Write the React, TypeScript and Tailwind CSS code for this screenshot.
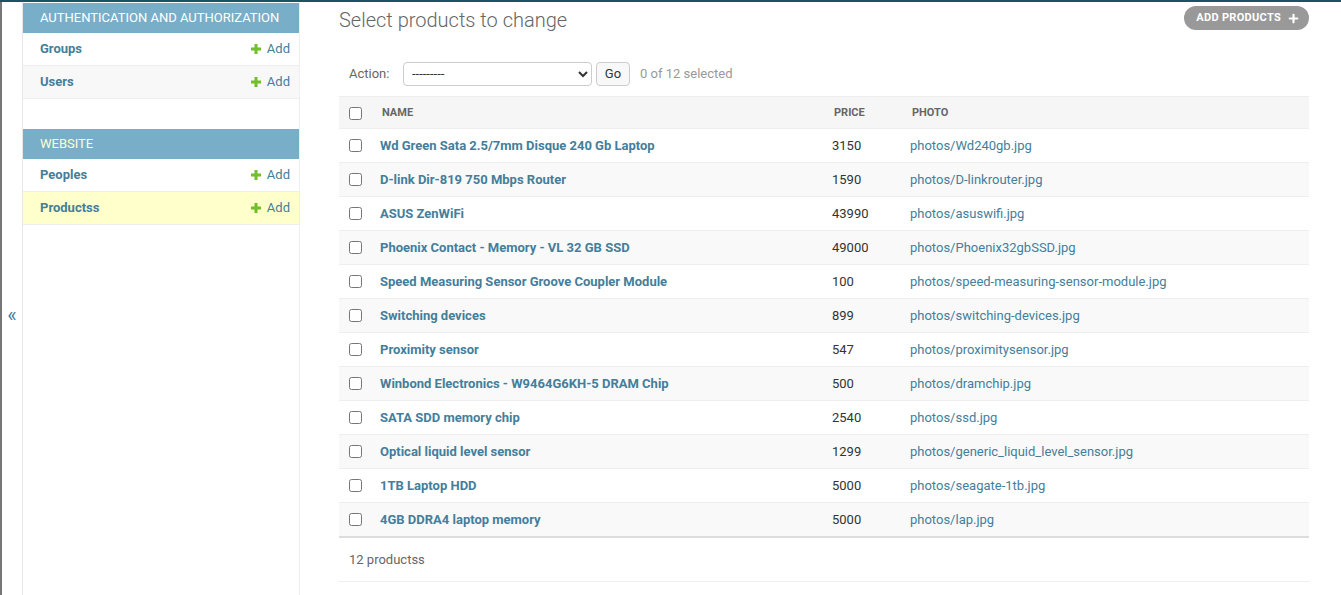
import { Plus } from "lucide-react";

const PRODUCTS = [
  { name: "Wd Green Sata 2.5/7mm Disque 240 Gb Laptop", price: "3150", photo: "photos/Wd240gb.jpg" },
  { name: "D-link Dir-819 750 Mbps Router", price: "1590", photo: "photos/D-linkrouter.jpg" },
  { name: "ASUS ZenWiFi", price: "43990", photo: "photos/asuswifi.jpg" },
  { name: "Phoenix Contact - Memory - VL 32 GB SSD", price: "49000", photo: "photos/Phoenix32gbSSD.jpg" },
  { name: "Speed Measuring Sensor Groove Coupler Module", price: "100", photo: "photos/speed-measuring-sensor-module.jpg" },
  { name: "Switching devices", price: "899", photo: "photos/switching-devices.jpg" },
  { name: "Proximity sensor", price: "547", photo: "photos/proximitysensor.jpg" },
  { name: "Winbond Electronics - W9464G6KH-5 DRAM Chip", price: "500", photo: "photos/dramchip.jpg" },
  { name: "SATA SDD memory chip", price: "2540", photo: "photos/ssd.jpg" },
  { name: "Optical liquid level sensor", price: "1299", photo: "photos/generic_liquid_level_sensor.jpg" },
  { name: "1TB Laptop HDD", price: "5000", photo: "photos/seagate-1tb.jpg" },
  { name: "4GB DDRA4 laptop memory", price: "5000", photo: "photos/lap.jpg" },
];

const SECTIONS = [
  {
    title: "Authentication and Authorization",
    current: false,
    models: [
      { label: "Groups", active: false },
      { label: "Users", active: false },
    ],
  },
  {
    title: "Website",
    current: true,
    models: [
      { label: "Peoples", active: false },
      { label: "Productss", active: true },
    ],
  },
];

function AddIcon() {
  return (
    <svg width="10" height="10" viewBox="0 0 10 10" className="shrink-0">
      <path d="M3.5 0h3v3.5H10v3H6.5V10h-3V6.5H0v-3h3.5z" fill="#70bf2b" />
    </svg>
  );
}

function Sidebar() {
  return (
    <nav className="w-[277px] shrink-0 border-r border-[#eee] pt-px">
      {SECTIONS.map((s, i) => (
        <div key={s.title} className={i > 0 ? "mt-[30px]" : ""}>
          <div className="h-[30px] bg-[#79aec8] pl-[17px] flex items-center">
            <span
              className={`text-[13px] uppercase ${
                s.current ? "text-[#ffc]" : "text-white"
              }`}
            >
              {s.title}
            </span>
          </div>
          {s.models.map((m, j) => (
            <div
              key={m.label}
              className={`h-[33px] border-b border-[#eee] flex items-center justify-between pl-[17px] pr-[9px] ${
                m.active ? "bg-[#ffc]" : j % 2 === 1 ? "bg-[#f8f8f8]" : "bg-white"
              }`}
            >
              <span className="text-[13px] font-bold text-[#447e9b]">{m.label}</span>
              <span className="flex items-center gap-[6px] text-[13px] text-[#447e9b]">
                <AddIcon />
                Add
              </span>
            </div>
          ))}
        </div>
      ))}
    </nav>
  );
}

function Checkbox() {
  return <input type="checkbox" className="w-[13px] h-[13px] m-0 accent-[#447e9b]" />;
}

export default function App() {
  return (
    <div className="h-[595px] overflow-hidden bg-white font-['Roboto',_'Liberation_Sans',_sans-serif] text-[13px] text-[#333] flex flex-col">
      <div className="h-[2px] bg-[#1a5462] shrink-0" />
      <div className="flex flex-1 min-h-0">
        {/* sidebar toggle */}
        <div className="w-[23px] shrink-0 border-l-2 border-l-[#777] border-r border-r-[#e8e8e8] flex justify-center pt-[303px]">
          <span className="text-[20px] leading-none text-[#447e9b]">«</span>
        </div>

        <Sidebar />

        <main className="flex-1 pl-[39px] pr-[32px]">
          <div className="flex items-start justify-between pt-[4px]">
            <h1 className="mt-[2px] text-[20px] leading-[24px] font-light text-[#666]">
              Select products to change
            </h1>
            <button className="h-[24px] pl-[12px] pr-[9px] rounded-full bg-[#999] text-white text-[11px] font-bold uppercase tracking-[0.3px] flex items-center gap-[6px]">
              Add products
              <Plus size={13} strokeWidth={4} />
            </button>
          </div>

          {/* actions */}
          <div className="mt-[29px] flex items-center pl-[10px] h-[25px]">
            <span className="w-[54px] text-[13px] text-[#666]">Action:</span>
            <select className="w-[189px] h-[24px] border border-[#ccc] rounded-[4px] bg-white text-[13px] text-[#333] pl-[4px]">
              <option>---------</option>
            </select>
            <button className="ml-[4px] h-[24px] w-[34px] border border-[#ccc] rounded-[4px] bg-[#f8f8f8] text-[13px] text-[#333]">
              Go
            </button>
            <span className="ml-[10px] text-[13px] text-[#999]">0 of 12 selected</span>
          </div>

          {/* results */}
          <div className="mt-[10px]">
            <div className="grid grid-cols-[33px_452px_78px_1fr] h-[33px] pt-px items-center bg-[#f6f6f6] border-t border-b border-[#eee] text-[11px] font-bold uppercase text-[#666]">
              <div className="pl-[10px] flex items-center">
                <Checkbox />
              </div>
              <div className="pl-[10px]">Name</div>
              <div className="pl-[10px]">Price</div>
              <div className="pl-[10px]">Photo</div>
            </div>
            {PRODUCTS.map((p, i) => {
              const last = i === PRODUCTS.length - 1;
              return (
                <div
                  key={p.name}
                  className={`grid grid-cols-[33px_452px_78px_1fr] items-center ${
                    last ? "h-[35px] border-b-2 border-[#ddd]" : "h-[34px] border-b border-[#eee]"
                  } ${i % 2 === 1 ? "bg-[#f9f9f9]" : "bg-white"}`}
                >
                  <div className="pl-[10px] flex items-center">
                    <Checkbox />
                  </div>
                  <div className="pl-[8px] font-bold text-[#447e9b]">{p.name}</div>
                  <div className="pl-[8px] text-[#333]">{p.price}</div>
                  <div className="pl-[8px] text-[#447e9b]">{p.photo}</div>
                </div>
              );
            })}
            <div className="h-[44px] border-b border-[#eee] flex items-center pl-[10px] text-[#666]">
              12 productss
            </div>
          </div>
        </main>
      </div>
    </div>
  );
}
